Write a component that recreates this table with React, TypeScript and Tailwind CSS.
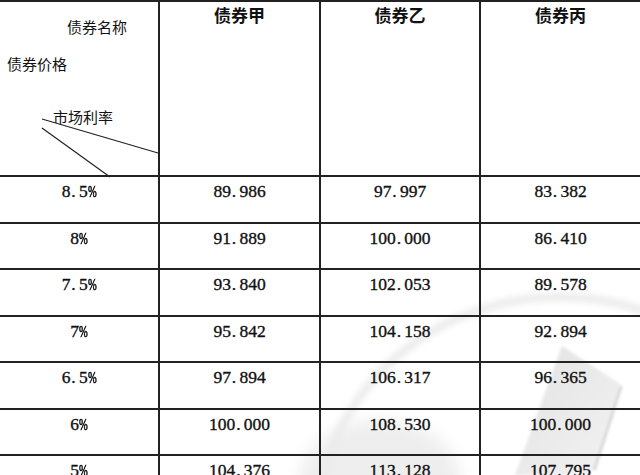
import React from "react";

const rows = [
  ["8.5%", "89.986", "97.997", "83.382"],
  ["8%", "91.889", "100.000", "86.410"],
  ["7.5%", "93.840", "102.053", "89.578"],
  ["7%", "95.842", "104.158", "92.894"],
  ["6.5%", "97.894", "106.317", "96.365"],
  ["6%", "100.000", "108.530", "100.000"],
  ["5%", "104.376", "113.128", "107.795"],
];

const rowHeights = ["h-[47px]", "h-[46px]", "h-[47px]", "h-[46px]", "h-[47px]", "h-[46px]", "h-[60px]"];

const cjk = "font-['Noto_Sans_CJK_SC',sans-serif]";

// half-width glyph slots, like a SimSun figure
function Figure({ text }: { text: string }) {
  return (
    <span className="inline-flex [-webkit-text-stroke:0.35px_#111]">
      {text.split("").map((c, i) =>
        c === "%" ? (
          <span key={i} className="inline-block w-[8.7px] overflow-visible text-left">
            <span className="inline-block origin-left scale-x-[0.6] [-webkit-text-stroke:0.7px_#111]">%</span>
          </span>
        ) : c === "." ? (
          <span key={i} className="inline-block w-[8.7px] pl-[1px] text-left">
            .
          </span>
        ) : (
          <span key={i} className="inline-block w-[8.7px] text-center">
            {c}
          </span>
        )
      )}
    </span>
  );
}

function Watermark() {
  return (
    <svg className="absolute inset-0" width="640" height="475" viewBox="0 0 640 475">
      <defs>
        <filter id="soft" x="-20%" y="-20%" width="140%" height="140%">
          <feGaussianBlur stdDeviation="8" />
        </filter>
        <filter id="band" x="-20%" y="-20%" width="140%" height="140%">
          <feGaussianBlur stdDeviation="3" />
        </filter>
        <filter id="softer" x="-20%" y="-20%" width="140%" height="140%">
          <feGaussianBlur stdDeviation="1.5" />
        </filter>
        <linearGradient id="napkin" x1="0" y1="0" x2="1" y2="1">
          <stop offset="0" stopColor="#e2e2e2" />
          <stop offset="1" stopColor="#f2f2f2" />
        </linearGradient>
      </defs>
      {/* plate */}
      <ellipse cx="380" cy="480" rx="80" ry="60" fill="#eeeeee" filter="url(#soft)" />
      <ellipse cx="560" cy="520" rx="240" ry="223" fill="none" stroke="#ebebeb" strokeWidth="8" filter="url(#band)" />
      {/* napkin */}
      <polygon points="562,346 620,384 590,475 515,475" fill="url(#napkin)" filter="url(#softer)" />
      <line x1="621" y1="386" x2="594" y2="470" stroke="#d2d2d2" strokeWidth="3" filter="url(#softer)" />
    </svg>
  );
}

export default function App() {
  return (
    <div className={`relative h-[475px] w-[640px] overflow-hidden bg-white text-[#111] ${cjk}`}>
      <Watermark />

      <div className="relative">
        {/* Header */}
        <div className="grid h-[175px] grid-cols-[158px_161px_160px_1fr] border-t-2 border-[#222]">
          <div className="relative text-[15px] leading-[15px]">
            <div className="pl-[67px] pt-[17px]">债券名称</div>
            <div className="pl-[7px] pt-[22px]">债券价格</div>
            <div className="pl-[53px] pt-[38px]">市场利率</div>
            <svg className="absolute left-0 top-0 z-10 overflow-visible" width="158" height="175">
              <line x1="42" y1="117" x2="158" y2="151" stroke="#222" strokeWidth="1.2" />
              <line x1="42" y1="126" x2="110" y2="175" stroke="#222" strokeWidth="1.2" />
            </svg>
          </div>
          {["债券甲", "债券乙", "债券丙"].map((h) => (
            <div key={h} className="border-l-2 border-[#222] pt-[4px] text-center text-[17px] font-bold leading-[17px]">
              {h}
            </div>
          ))}
        </div>

        {/* Body */}
        {rows.map((r, ri) => (
          <div
            key={ri}
            className={`grid ${rowHeights[ri]} grid-cols-[158px_161px_160px_1fr] border-t-2 border-[#222] font-['Liberation_Serif',serif] text-[17.5px] leading-[20px]`}
          >
            {r.map((v, ci) => (
              <div key={ci} className={`pt-[4px] text-center ${ci > 0 ? "border-l-2 border-[#222]" : ""}`}>
                <Figure text={v} />
              </div>
            ))}
          </div>
        ))}
      </div>
    </div>
  );
}
